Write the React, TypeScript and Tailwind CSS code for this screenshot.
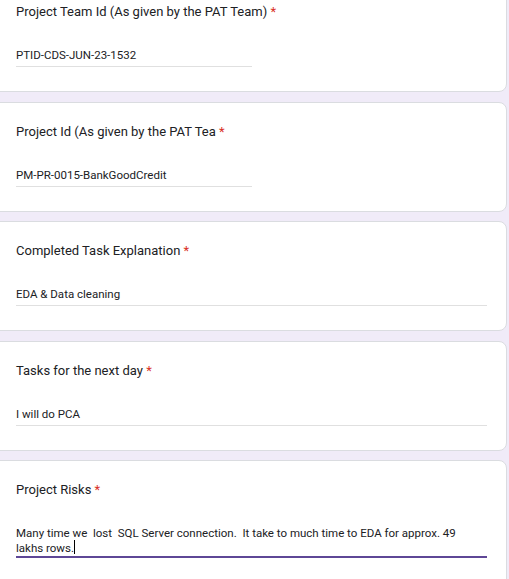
import * as React from 'react'

type Field = {
  label: string
  value: string
  wide?: boolean
  active?: boolean
}

const fields: Field[] = [
  { label: 'Project Team Id (As given by the PAT Team)', value: 'PTID-CDS-JUN-23-1532' },
  { label: 'Project Id (As given by the PAT Tea', value: 'PM-PR-0015-BankGoodCredit' },
  { label: 'Completed Task Explanation', value: 'EDA & Data cleaning', wide: true },
  { label: 'Tasks for the next day', value: 'I will do PCA', wide: true },
  {
    label: 'Project Risks',
    value: 'Many time we  lost  SQL Server connection.  It take to much time to EDA for approx. 49 lakhs rows.',
    wide: true,
    active: true,
  },
]

function QuestionCard({ label, value, wide, active }: Field) {
  return (
    <div className="-ml-3 mr-[2px] h-[110px] shrink-0 rounded-lg border border-[#dadce0] bg-white pl-[27px] pt-[19px] last:h-[140px]">
      <div className="text-[13px] leading-5 text-[#202124]">
        {label} <span className="text-[#d93025]">*</span>
      </div>

      <div
        className={
          'mt-[26px] text-[11.5px] leading-[15px] text-[#202124] ' +
          (wide ? 'w-[471px] ' : 'w-[236px] ') +
          (active ? 'border-b-2 border-[#5e4796]' : 'border-b border-[#e0e0e0] pb-[3px]')
        }
      >
        <div className="whitespace-pre-wrap pr-[22px]">
          {value}
          {/* text cursor */}
          {active && (
            <span className="relative">
              <span className="absolute left-0 top-[-1px] h-[14px] w-px bg-black" />
            </span>
          )}
        </div>
      </div>
    </div>
  )
}

export default function App() {
  return (
    <div
      className="h-[579px] overflow-hidden bg-[#f0ebf8]"
      style={{ fontFamily: 'Roboto, "Liberation Sans", sans-serif' }}
    >
      <div className="-mt-[18px] flex flex-col gap-[9.5px]">
        {fields.map((f) => (
          <QuestionCard key={f.label} {...f} />
        ))}
      </div>
    </div>
  )
}
